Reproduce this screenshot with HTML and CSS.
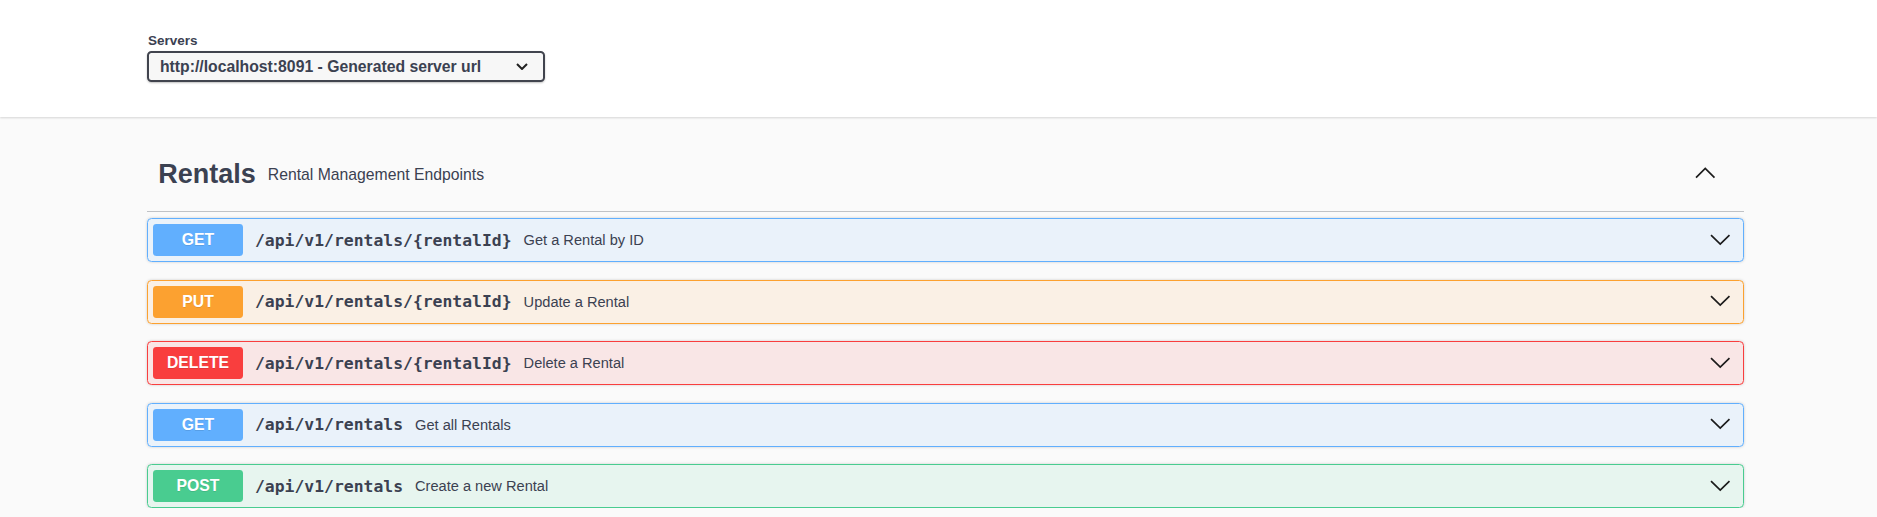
FILE: index.html
```html
<!DOCTYPE html>
<html lang="en">
<head>
<meta charset="utf-8">
<title>Swagger UI</title>
<link rel="stylesheet" href="styles.css">
</head>
<body>
<header class="scheme">
  <div class="wrap">
    <div class="servers">
      <span class="servers-title">Servers</span>
      <div class="select">
        <span>http://localhost:8091 - Generated server url</span>
        <svg class="select-arrow" width="12" height="7" viewBox="0 0 12 7"><polyline points="1,1 6,6 11,1" fill="none" stroke="#222" stroke-width="2"/></svg>
      </div>
    </div>
  </div>
</header>
<main class="wrap">
  <section class="tag-section">
    <h3 class="tag">
      <span class="tag-name">Rentals</span>
      <small class="tag-desc">Rental Management Endpoints</small>
      <svg class="arrow" width="22.5" height="22.5" viewBox="0 0 20 20"><polyline points="1.8,13.8 10,5.7 18.2,13.8" fill="none" stroke="#1b1b1b" stroke-width="1.5"/></svg>
    </h3>
    <div class="ops">
      <div class="op op-get">
        <span class="method">GET</span>
        <span class="path">/api/v1/rentals/{rentalId}</span>
        <span class="desc">Get a Rental by ID</span>
        <svg class="arrow" width="22.5" height="22.5" viewBox="0 0 20 20"><polyline points="1.8,5.4 10,13.4 18.2,5.4" fill="none" stroke="#1b1b1b" stroke-width="1.5"/></svg>
      </div>
      <div class="op op-put">
        <span class="method">PUT</span>
        <span class="path">/api/v1/rentals/{rentalId}</span>
        <span class="desc">Update a Rental</span>
        <svg class="arrow" width="22.5" height="22.5" viewBox="0 0 20 20"><polyline points="1.8,5.4 10,13.4 18.2,5.4" fill="none" stroke="#1b1b1b" stroke-width="1.5"/></svg>
      </div>
      <div class="op op-delete">
        <span class="method">DELETE</span>
        <span class="path">/api/v1/rentals/{rentalId}</span>
        <span class="desc">Delete a Rental</span>
        <svg class="arrow" width="22.5" height="22.5" viewBox="0 0 20 20"><polyline points="1.8,5.4 10,13.4 18.2,5.4" fill="none" stroke="#1b1b1b" stroke-width="1.5"/></svg>
      </div>
      <div class="op op-get">
        <span class="method">GET</span>
        <span class="path">/api/v1/rentals</span>
        <span class="desc">Get all Rentals</span>
        <svg class="arrow" width="22.5" height="22.5" viewBox="0 0 20 20"><polyline points="1.8,5.4 10,13.4 18.2,5.4" fill="none" stroke="#1b1b1b" stroke-width="1.5"/></svg>
      </div>
      <div class="op op-post">
        <span class="method">POST</span>
        <span class="path">/api/v1/rentals</span>
        <span class="desc">Create a new Rental</span>
        <svg class="arrow" width="22.5" height="22.5" viewBox="0 0 20 20"><polyline points="1.8,5.4 10,13.4 18.2,5.4" fill="none" stroke="#1b1b1b" stroke-width="1.5"/></svg>
      </div>
    </div>
  </section>
</main>
</body>
</html>
```
FILE: styles.css
```css
html, body {
  margin: 0;
  padding: 0;
}
body {
  background: #fafafa;
  font-family: "Liberation Sans", Arial, sans-serif;
  color: #3b4151;
}
.wrap {
  width: 1597px;
  margin-left: 147px;
}
.scheme {
  background: #fff;
  padding: 33px 0 35px;
  box-shadow: 0 1px 2px 0 rgba(0, 0, 0, .15);
}
.servers-title {
  display: block;
  font-size: 13.5px;
  font-weight: 700;
  line-height: 15px;
  margin: 0 0 3px 1px;
}
.select {
  box-sizing: border-box;
  width: 398px;
  height: 31px;
  display: flex;
  align-items: center;
  justify-content: space-between;
  padding: 0 15px 0 11px;
  border: 2px solid #41444e;
  border-radius: 4.5px;
  background: #f7f7f7;
  box-shadow: 0 1px 2px 0 rgba(0, 0, 0, .25);
  font-size: 15.75px;
  font-weight: 700;
}
.select-arrow {
  display: block;
}
main.wrap {
  margin-top: 19px;
}
.tag {
  box-sizing: border-box;
  height: 76px;
  margin: 0;
  display: flex;
  align-items: center;
  padding: 0 28px 0 11.25px;
  border-bottom: 1px solid rgba(59, 65, 81, .3);
  font-size: 27px;
  font-weight: 700;
}
.tag-name {
  margin-top: 2px;
}
.tag-desc {
  flex: 1;
  font-size: 15.75px;
  font-weight: 400;
  padding: 0 12px;
  margin-top: 2px;
}
.arrow {
  display: block;
  flex: none;
}
.ops {
  display: flex;
  flex-direction: column;
  gap: 17.5px;
  margin-top: 6px;
}
.op {
  box-sizing: border-box;
  height: 44px;
  display: flex;
  align-items: center;
  padding: 0 12px 0 5px;
  border: 1px solid;
  border-radius: 4.5px;
  box-shadow: 0 0 3px rgba(0, 0, 0, .19);
}
.method {
  width: 90px;
  height: 32px;
  line-height: 32px;
  text-align: center;
  border-radius: 3.4px;
  color: #fff;
  font-size: 15.75px;
  font-weight: 700;
  text-shadow: 0 1px 0 rgba(0, 0, 0, .1);
}
.path {
  font-family: "DejaVu Sans Mono", "Liberation Mono", monospace;
  font-size: 16.4px;
  font-weight: 700;
  padding: 0 12px;
}
.desc {
  flex: 1;
  font-size: 14.625px;
}
.op-get { border-color: #61affe; background: rgba(97, 175, 254, .1); }
.op-get .method { background: #61affe; }
.op-put { border-color: #fca130; background: rgba(252, 161, 48, .1); }
.op-put .method { background: #fca130; }
.op-delete { border-color: #f93e3e; background: rgba(249, 62, 62, .1); }
.op-delete .method { background: #f93e3e; }
.op-post { border-color: #49cc90; background: rgba(73, 204, 144, .1); }
.op-post .method { background: #49cc90; }
```
